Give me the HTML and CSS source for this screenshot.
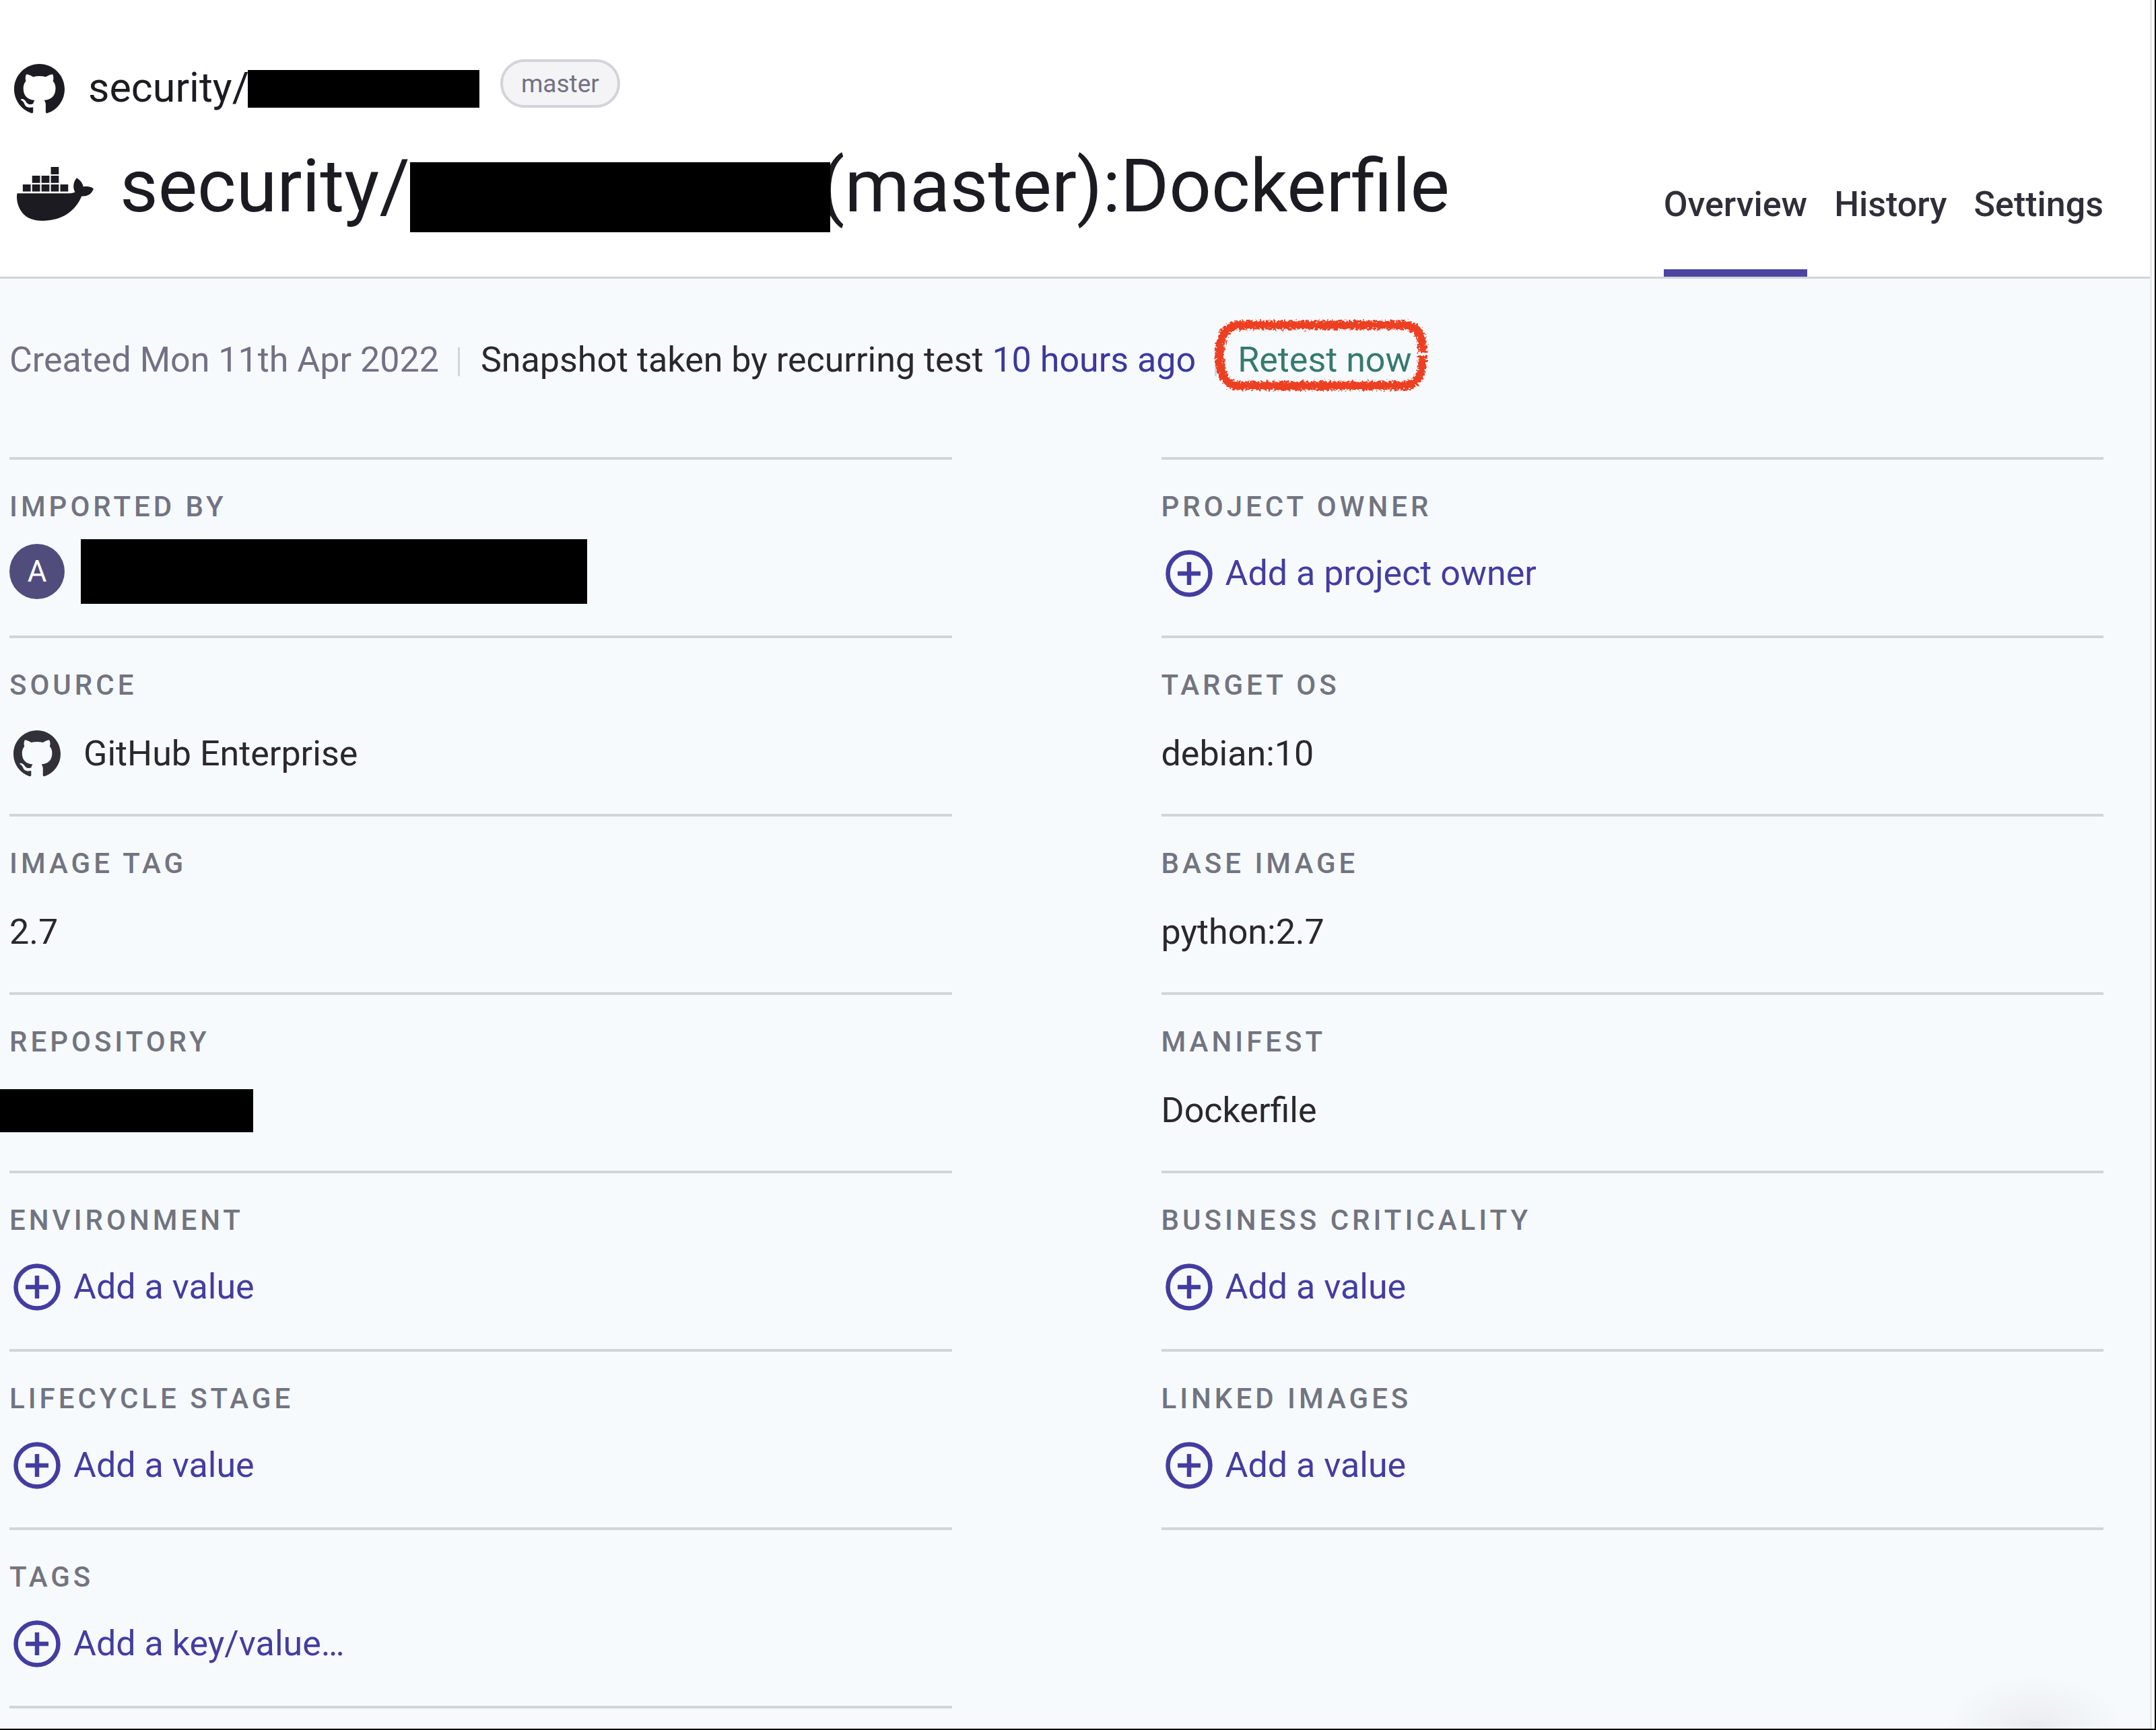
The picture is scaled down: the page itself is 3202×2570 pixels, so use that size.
FILE: index.html
```html
<!DOCTYPE html>
<html lang="en">
<head>
<meta charset="utf-8">
<title>Project overview</title>
<link rel="stylesheet" href="styles.css">
</head>
<body>
<svg class="sprite" aria-hidden="true">
  <symbol id="github" viewBox="0 0 16 16"><path d="M8 0C3.58 0 0 3.58 0 8c0 3.54 2.29 6.53 5.47 7.59.4.07.55-.17.55-.38 0-.19-.01-.82-.01-1.49-2.01.37-2.53-.49-2.69-.94-.09-.23-.48-.94-.82-1.13-.28-.15-.68-.52-.01-.53.63-.01 1.08.58 1.23.82.72 1.21 1.87.87 2.33.66.07-.52.28-.87.51-1.07-1.78-.2-3.64-.89-3.64-3.95 0-.87.31-1.59.82-2.15-.08-.2-.36-1.02.08-2.12 0 0 .67-.21 2.2.82.64-.18 1.32-.27 2-.27s1.36.09 2 .27c1.53-1.04 2.2-.82 2.2-.82.44 1.1.16 1.92.08 2.12.51.56.82 1.27.82 2.15 0 3.07-1.87 3.75-3.65 3.95.29.25.54.73.54 1.48 0 1.07-.01 1.93-.01 2.2 0 .21.15.46.55.38A8.01 8.01 0 0 0 16 8c0-4.42-3.58-8-8-8z"/></symbol>
  <symbol id="plus" viewBox="0 0 70 70"><circle cx="35" cy="35" r="31.5" fill="none" stroke="currentColor" stroke-width="6.5"/><path d="M35 18v34M18 35h34" fill="none" stroke="currentColor" stroke-width="6.5"/></symbol>
</svg>
<div class="app">
  <header class="header">
    <div class="heading">
      <div class="repo">
        <svg class="repo-icon" aria-hidden="true"><use href="#github"/></svg>
        <span class="repo-name">security/</span><span class="redacted redacted-repo"></span>
        <span class="branch">master</span>
      </div>
      <div class="title-row">
        <svg class="docker" viewBox="0 32 640 448" aria-hidden="true"><path d="M349.9 236.3h-66.1v-59.4h66.1v59.4zm0-204.3h-66.1v60.7h66.1V32zm78.2 144.8H362v59.4h66.1v-59.4zm-156.3-72.1h-66.1v60.1h66.1v-60.1zm78.1 0h-66.1v60.1h66.1v-60.1zm276.8 100c-14.4-9.7-47.6-13.2-73.1-8.4-3.3-24-16.7-44.9-41.1-63.7l-14-9.3-9.3 14c-18.4 27.8-23.4 73.6-3.7 103.8-8.7 4.7-25.8 11.1-48.4 10.7H2.4c-8.7 50.8 5.8 116.8 44 162.1 37.1 43.9 92.7 66.2 165.4 66.2 157.4 0 273.9-72.5 328.4-204.2 21.4.4 67.6.1 91.3-45.2 1.5-2.5 6.6-13.2 8.5-17.1l-13.3-8.9zm-511.1-27.9h-66v59.4h66.1v-59.4zm78.1 0h-66.1v59.4h66.1v-59.4zm78.1 0h-66.1v59.4h66.1v-59.4zm-78.1-72.1h-66.1v60.1h66.1v-60.1z"/></svg>
        <h1 class="title"><span>security/</span><span class="redacted redacted-title"></span><span>(master):Dockerfile</span></h1>
      </div>
    </div>
    <nav class="tabs">
      <a class="tab tab-active" href="#overview">Overview</a>
      <a class="tab" href="#history">History</a>
      <a class="tab" href="#settings">Settings</a>
    </nav>
  </header>
  <main class="main">
    <div class="meta">
      <span class="created">Created Mon 11th Apr 2022</span>
      <span class="snapshot">Snapshot taken by recurring test <a class="link" href="#snapshot">10 hours ago</a></span>
      <span class="retest-cell"><button class="retest" type="button">Retest now</button>
        <svg class="marker" viewBox="0 0 316 106" aria-hidden="true">
          <filter id="rough" x="-5%" y="-10%" width="110%" height="120%"><feTurbulence type="fractalNoise" baseFrequency="0.3" numOctaves="2" seed="4"/><feDisplacementMap in="SourceGraphic" scale="12" xChannelSelector="R" yChannelSelector="G"/></filter>
          <path filter="url(#rough)" d="M309 48C309 22 300 9 282 8H36C16 9 7 26 7 53S16 97 36 98H282C300 97 309 84 309 54"/>
        </svg>
      </span>
    </div>
    <div class="columns">
      <dl class="details">
        <div class="row"><dt>IMPORTED BY</dt><dd class="person"><span class="avatar">A</span><span class="redacted redacted-person"></span></dd></div>
        <div class="row"><dt>SOURCE</dt><dd class="source"><svg class="source-icon" aria-hidden="true"><use href="#github"/></svg>GitHub Enterprise</dd></div>
        <div class="row"><dt>IMAGE TAG</dt><dd>2.7</dd></div>
        <div class="row"><dt>REPOSITORY</dt><dd><span class="redacted redacted-value"></span></dd></div>
        <div class="row"><dt>ENVIRONMENT</dt><dd class="action"><button class="add" type="button"><svg class="plus" aria-hidden="true"><use href="#plus"/></svg>Add a value</button></dd></div>
        <div class="row"><dt>LIFECYCLE STAGE</dt><dd class="action"><button class="add" type="button"><svg class="plus" aria-hidden="true"><use href="#plus"/></svg>Add a value</button></dd></div>
        <div class="row"><dt>TAGS</dt><dd class="action"><button class="add" type="button"><svg class="plus" aria-hidden="true"><use href="#plus"/></svg>Add a key/value…</button></dd></div>
      </dl>
      <dl class="details">
        <div class="row"><dt>PROJECT OWNER</dt><dd class="action"><button class="add" type="button"><svg class="plus" aria-hidden="true"><use href="#plus"/></svg>Add a project owner</button></dd></div>
        <div class="row"><dt>TARGET OS</dt><dd>debian:10</dd></div>
        <div class="row"><dt>BASE IMAGE</dt><dd>python:2.7</dd></div>
        <div class="row"><dt>MANIFEST</dt><dd>Dockerfile</dd></div>
        <div class="row"><dt>BUSINESS CRITICALITY</dt><dd class="action"><button class="add" type="button"><svg class="plus" aria-hidden="true"><use href="#plus"/></svg>Add a value</button></dd></div>
        <div class="row"><dt>LINKED IMAGES</dt><dd class="action"><button class="add" type="button"><svg class="plus" aria-hidden="true"><use href="#plus"/></svg>Add a value</button></dd></div>
      </dl>
    </div>
  </main>
</div>
</body>
</html>
```

FILE: styles.css
```css
* { box-sizing: border-box; }

body {
  margin: 0;
  min-height: 100vh;
  display: flex;
  background: #fdfdfe;
  border-right: 2px solid #000;
  border-bottom: 2px solid #000;
  font-family: Roboto, "Liberation Sans", sans-serif;
  font-size: 52px;
  line-height: 60px;
  color: #29282f;
}

.sprite { position: absolute; width: 0; height: 0; }

.app {
  flex: 1;
  display: flex;
  flex-direction: column;
  margin-right: 4px;
  border-right: 3px solid #e8e9ec;
  background: #f6fafd;
}

button {
  padding: 0;
  border: 0;
  background: none;
  font: inherit;
  cursor: pointer;
}

a { color: inherit; text-decoration: none; }

.redacted { position: relative; display: block; flex: none; background: #000; }

/* Header */
.header {
  display: flex;
  justify-content: space-between;
  align-items: flex-end;
  padding: 88px 69px 0 21px;
  border-bottom: 3px solid #d3d3d8;
  background: #fff;
  color: #1c1b21;
}

.heading { padding-bottom: 66px; }

.repo { display: flex; align-items: center; height: 88px; }
.repo-icon { width: 75px; height: 75px; margin-right: 35px; fill: currentColor; }
.repo-name { padding-bottom: 4px; font-size: 61px; }
.redacted-repo { width: 344px; height: 56px; margin-left: -2px; }

.branch {
  align-self: flex-start;
  height: 72px;
  margin-left: 31px;
  padding: 0 27px;
  border: 4px solid #d3d3d9;
  border-radius: 36px;
  background: #f4f4f6;
  color: #727184;
  font-size: 37px;
  line-height: 66px;
}

.title-row {
  display: flex;
  align-items: flex-end;
  margin: 33px 0 0 4px;
}

.docker { width: 114px; height: 82px; margin: 0 39px 16px 0; fill: currentColor; }

.title {
  display: flex;
  align-items: flex-end;
  margin: 0;
  font-size: 110px;
  font-weight: 400;
  line-height: 136px;
  white-space: nowrap;
}

.redacted-title { width: 624px; height: 104px; margin: 0 -16px 0 0; }

.tabs { display: flex; gap: 40px; }

.tab {
  padding-bottom: 66px;
  border-bottom: 11px solid transparent;
  color: #302f38;
  font-weight: 500;
}

.tab-active { border-color: #4b45a1; }

/* Content */
.main {
  flex: 1;
  padding: 91px 69px 30px 14px;
  background: radial-gradient(135px 80px at calc(100% - 170px) 100%, #ebebee, #f1f4f7 55%, #f6fafd);
}

.meta { display: flex; align-items: center; white-space: nowrap; }
.created { color: #727184; }
.snapshot, .retest-cell { position: relative; margin-left: 28px; padding-left: 34px; }

.snapshot::before,
.retest-cell::before {
  content: "";
  position: absolute;
  left: 0;
  top: 11px;
  width: 3px;
  height: 43px;
  background: #d3d5da;
}

.link { color: #3d389d; }
.retest { color: #36796f; }

.marker {
  position: absolute;
  left: 0;
  top: -30px;
  width: 316px;
  height: 106px;
  overflow: visible;
  fill: none;
  stroke: #ed4024;
  stroke-width: 13px;
  pointer-events: none;
}

.columns {
  display: grid;
  grid-template-columns: 1fr 1fr;
  gap: 311px;
  align-items: start;
  margin-top: 114px;
}

.details { margin: 0; border-bottom: 4px solid #d1d5d9; }
.row { padding: 46px 0 43px; border-top: 4px solid #d1d5d9; }

dt {
  color: #727480;
  font-size: 42px;
  font-weight: 500;
  line-height: 48px;
  letter-spacing: 5px;
}

dd {
  display: flex;
  align-items: center;
  height: 100px;
  margin: 24px 0 0;
  padding-top: 8px;
}

.action { padding: 2px 0 0; }
.add { display: flex; align-items: center; color: #433da0; }
.plus { width: 70px; height: 70px; margin: 0 19px 0 6px; }

.person { padding: 0 0 4px; }

.avatar {
  width: 82px;
  height: 82px;
  margin-right: 24px;
  border-radius: 50%;
  background: #504d7d;
  color: #fff;
  font-size: 44px;
  line-height: 82px;
  text-align: center;
}

.redacted-person { width: 752px; height: 96px; }
.source-icon { width: 70px; height: 70px; margin: 0 34px 0 6px; fill: #32313a; }
.redacted-value { width: 376px; height: 64px; margin-left: -14px; }
```
